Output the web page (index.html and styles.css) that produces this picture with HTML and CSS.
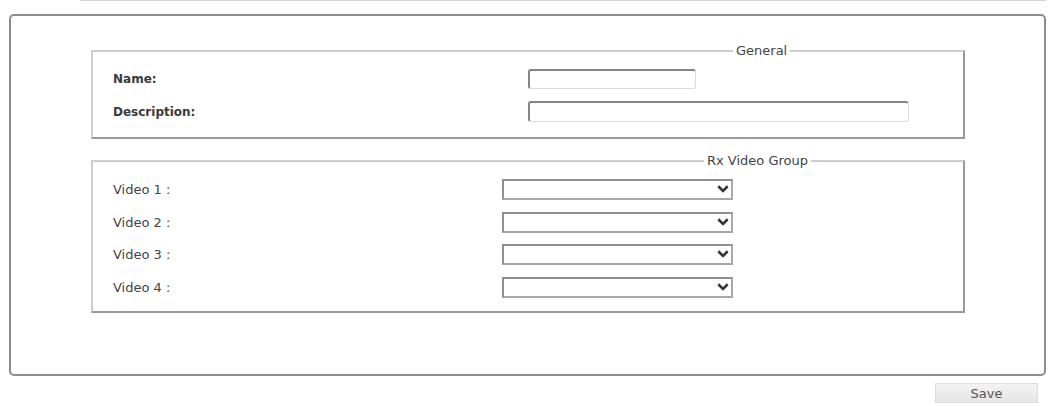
FILE: index.html
```html
<!DOCTYPE html>
<html>
    <head>
        <title>Rx Video Group</title>
        <link rel="stylesheet" href="styles.css">
    </head>
    <body>
        <div class="topline"></div>
        <div class="panel">
            <!-- General settings -->
            <fieldset class="group">
                <legend class="legend-general">General</legend>
                <div class="rows rows-general">
                    <label class="field-label strong" for="name">Name:</label>
                    <input class="text-input input-short" id="name" type="text">
                    <label class="field-label strong" for="desc">Description:</label>
                    <input class="text-input input-long" id="desc" type="text">
                </div>
            </fieldset>

            <!-- Video outputs of the group -->
            <fieldset class="group group-video">
                <legend class="legend-video">Rx Video Group</legend>
                <div class="rows rows-video">
                    <label class="field-label">Video 1 :</label>
                    <span class="select-wrap">
                        <select class="video-select"></select>
                        <svg class="chevron" width="12" height="8" viewBox="0 0 12 8"><path d="M1.3 1.3 L6 5.9 L10.7 1.3" fill="none" stroke="#333" stroke-width="2.6"/></svg>
                    </span>
                    <label class="field-label">Video 2 :</label>
                    <span class="select-wrap">
                        <select class="video-select"></select>
                        <svg class="chevron" width="12" height="8" viewBox="0 0 12 8"><path d="M1.3 1.3 L6 5.9 L10.7 1.3" fill="none" stroke="#333" stroke-width="2.6"/></svg>
                    </span>
                    <label class="field-label">Video 3 :</label>
                    <span class="select-wrap">
                        <select class="video-select"></select>
                        <svg class="chevron" width="12" height="8" viewBox="0 0 12 8"><path d="M1.3 1.3 L6 5.9 L10.7 1.3" fill="none" stroke="#333" stroke-width="2.6"/></svg>
                    </span>
                    <label class="field-label">Video 4 :</label>
                    <span class="select-wrap">
                        <select class="video-select"></select>
                        <svg class="chevron" width="12" height="8" viewBox="0 0 12 8"><path d="M1.3 1.3 L6 5.9 L10.7 1.3" fill="none" stroke="#333" stroke-width="2.6"/></svg>
                    </span>
                </div>
            </fieldset>
        </div>
        <div class="actions">
            <button class="btn-save" type="button">Save</button>
        </div>
    </body>
</html>
```

FILE: styles.css
```css
* {
    box-sizing: border-box;
}

body {
    margin: 0;
    background-color: white;
    color: #333;
    font-family: "DejaVu Sans", Verdana, sans-serif;
    font-size: 13px;
}

/* Thin rule under the page header */
.topline {
    height: 1px;
    margin-left: 80px;
    margin-right: 5px;
    background-color: #d4d4d4;
}

/* Outer frame around both groups */
.panel {
    margin: 13px 5px 0 9px;
    height: 362px;
    padding: 27px 79px 0 80px;
    border: 2px solid #8c8c8c;
    border-radius: 5px;
}

.group {
    margin: 0;
    padding: 11px 20px 15px 20px;
    border-style: solid;
    border-width: 2px;
    border-color: #cdcdcd #9a9a9a #9a9a9a #cdcdcd;
}

.group-video {
    margin-top: 14px;
    padding-top: 11px;
    padding-bottom: 13px;
}

.group legend {
    padding: 0 3px;
    line-height: 15px;
    color: #444;
}

.legend-general {
    margin-left: 620px;
}

.legend-video {
    margin-left: 591px;
}

/* Label / control rows */
.rows {
    display: grid;
    align-items: center;
}

.rows-general {
    grid-template-columns: 415px auto;
    row-gap: 12px;
}

.rows-video {
    grid-template-columns: 389px auto;
    row-gap: 11.5px;
}

.field-label {
    color: #444;
}

.field-label.strong {
    font-size: 12px;
    font-weight: bold;
    color: #3a3a3a;
}

.text-input {
    height: 20px;
    margin: 0;
    padding: 0 3px;
    border-style: solid;
    border-width: 2px 1px 1px 2px;
    border-color: #858585 #dcdcdc #dcdcdc #858585;
    border-radius: 3px;
    background-color: white;
}

.input-short {
    width: 168px;
}

.input-long {
    width: 381px;
    height: 21px;
}

/* Dropdowns with a drawn arrow on top */
.select-wrap {
    position: relative;
    display: block;
    width: 231px;
    height: 21px;
}

.video-select {
    display: block;
    width: 100%;
    height: 21px;
    margin: 0;
    border-style: solid;
    border-width: 2px;
    border-color: #8f8f8f #a8a8a8 #a8a8a8 #8f8f8f;
    border-radius: 0;
    background-color: white;
    appearance: none;
    -webkit-appearance: none;
}

.chevron {
    position: absolute;
    top: 6px;
    right: 4px;
}

/* Button row under the frame */
.actions {
    display: flex;
    justify-content: flex-end;
    padding: 7px 13px 0 0;
}

.btn-save {
    width: 103px;
    height: 20px;
    padding: 0;
    border: 1px solid #dddddd;
    background: linear-gradient(#f3f3f3, #e6e6e6);
    color: #555;
    font-family: "DejaVu Sans", Verdana, sans-serif;
    font-size: 13px;
}
```
